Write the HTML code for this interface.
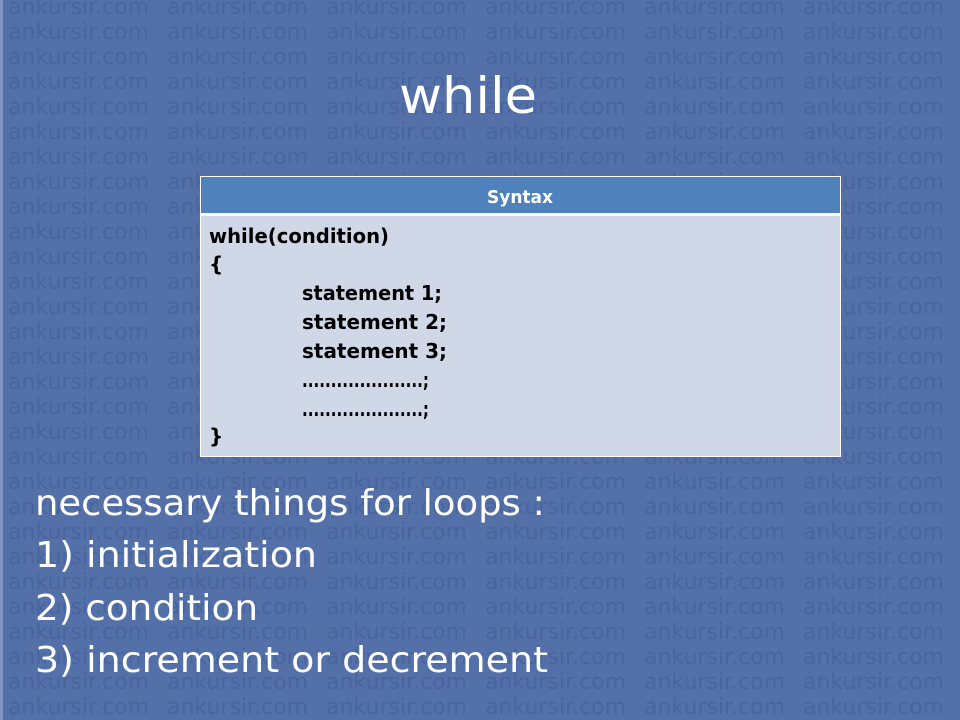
<!DOCTYPE html>
<html><head><meta charset="utf-8"><style>
body{margin:0;width:960px;height:720px;overflow:hidden;background:#5470a8;position:relative;font-family:"DejaVu Sans","Liberation Sans",sans-serif}
.wm{position:absolute;left:0;top:0;width:960px;height:720px;overflow:hidden}
.row{position:absolute;left:8px;white-space:nowrap;font-size:22px;color:#4a659e;height:25px;line-height:25px}
.row span{display:inline-block;width:159px}
.edge{position:absolute;left:0;top:0;width:3px;height:720px;background:#7f95c4}
svg{position:absolute;left:0;top:0}
</style></head><body>
<div class="wm">
<div class="row" style="top:-5px"><span>ankursir.com</span><span>ankursir.com</span><span>ankursir.com</span><span>ankursir.com</span><span>ankursir.com</span><span>ankursir.com</span><span>ankursir.com</span></div>
<div class="row" style="top:20px"><span>ankursir.com</span><span>ankursir.com</span><span>ankursir.com</span><span>ankursir.com</span><span>ankursir.com</span><span>ankursir.com</span><span>ankursir.com</span></div>
<div class="row" style="top:45px"><span>ankursir.com</span><span>ankursir.com</span><span>ankursir.com</span><span>ankursir.com</span><span>ankursir.com</span><span>ankursir.com</span><span>ankursir.com</span></div>
<div class="row" style="top:70px"><span>ankursir.com</span><span>ankursir.com</span><span>ankursir.com</span><span>ankursir.com</span><span>ankursir.com</span><span>ankursir.com</span><span>ankursir.com</span></div>
<div class="row" style="top:95px"><span>ankursir.com</span><span>ankursir.com</span><span>ankursir.com</span><span>ankursir.com</span><span>ankursir.com</span><span>ankursir.com</span><span>ankursir.com</span></div>
<div class="row" style="top:120px"><span>ankursir.com</span><span>ankursir.com</span><span>ankursir.com</span><span>ankursir.com</span><span>ankursir.com</span><span>ankursir.com</span><span>ankursir.com</span></div>
<div class="row" style="top:145px"><span>ankursir.com</span><span>ankursir.com</span><span>ankursir.com</span><span>ankursir.com</span><span>ankursir.com</span><span>ankursir.com</span><span>ankursir.com</span></div>
<div class="row" style="top:170px"><span>ankursir.com</span><span>ankursir.com</span><span>ankursir.com</span><span>ankursir.com</span><span>ankursir.com</span><span>ankursir.com</span><span>ankursir.com</span></div>
<div class="row" style="top:195px"><span>ankursir.com</span><span>ankursir.com</span><span>ankursir.com</span><span>ankursir.com</span><span>ankursir.com</span><span>ankursir.com</span><span>ankursir.com</span></div>
<div class="row" style="top:220px"><span>ankursir.com</span><span>ankursir.com</span><span>ankursir.com</span><span>ankursir.com</span><span>ankursir.com</span><span>ankursir.com</span><span>ankursir.com</span></div>
<div class="row" style="top:245px"><span>ankursir.com</span><span>ankursir.com</span><span>ankursir.com</span><span>ankursir.com</span><span>ankursir.com</span><span>ankursir.com</span><span>ankursir.com</span></div>
<div class="row" style="top:270px"><span>ankursir.com</span><span>ankursir.com</span><span>ankursir.com</span><span>ankursir.com</span><span>ankursir.com</span><span>ankursir.com</span><span>ankursir.com</span></div>
<div class="row" style="top:295px"><span>ankursir.com</span><span>ankursir.com</span><span>ankursir.com</span><span>ankursir.com</span><span>ankursir.com</span><span>ankursir.com</span><span>ankursir.com</span></div>
<div class="row" style="top:320px"><span>ankursir.com</span><span>ankursir.com</span><span>ankursir.com</span><span>ankursir.com</span><span>ankursir.com</span><span>ankursir.com</span><span>ankursir.com</span></div>
<div class="row" style="top:345px"><span>ankursir.com</span><span>ankursir.com</span><span>ankursir.com</span><span>ankursir.com</span><span>ankursir.com</span><span>ankursir.com</span><span>ankursir.com</span></div>
<div class="row" style="top:370px"><span>ankursir.com</span><span>ankursir.com</span><span>ankursir.com</span><span>ankursir.com</span><span>ankursir.com</span><span>ankursir.com</span><span>ankursir.com</span></div>
<div class="row" style="top:395px"><span>ankursir.com</span><span>ankursir.com</span><span>ankursir.com</span><span>ankursir.com</span><span>ankursir.com</span><span>ankursir.com</span><span>ankursir.com</span></div>
<div class="row" style="top:420px"><span>ankursir.com</span><span>ankursir.com</span><span>ankursir.com</span><span>ankursir.com</span><span>ankursir.com</span><span>ankursir.com</span><span>ankursir.com</span></div>
<div class="row" style="top:445px"><span>ankursir.com</span><span>ankursir.com</span><span>ankursir.com</span><span>ankursir.com</span><span>ankursir.com</span><span>ankursir.com</span><span>ankursir.com</span></div>
<div class="row" style="top:470px"><span>ankursir.com</span><span>ankursir.com</span><span>ankursir.com</span><span>ankursir.com</span><span>ankursir.com</span><span>ankursir.com</span><span>ankursir.com</span></div>
<div class="row" style="top:495px"><span>ankursir.com</span><span>ankursir.com</span><span>ankursir.com</span><span>ankursir.com</span><span>ankursir.com</span><span>ankursir.com</span><span>ankursir.com</span></div>
<div class="row" style="top:520px"><span>ankursir.com</span><span>ankursir.com</span><span>ankursir.com</span><span>ankursir.com</span><span>ankursir.com</span><span>ankursir.com</span><span>ankursir.com</span></div>
<div class="row" style="top:545px"><span>ankursir.com</span><span>ankursir.com</span><span>ankursir.com</span><span>ankursir.com</span><span>ankursir.com</span><span>ankursir.com</span><span>ankursir.com</span></div>
<div class="row" style="top:570px"><span>ankursir.com</span><span>ankursir.com</span><span>ankursir.com</span><span>ankursir.com</span><span>ankursir.com</span><span>ankursir.com</span><span>ankursir.com</span></div>
<div class="row" style="top:595px"><span>ankursir.com</span><span>ankursir.com</span><span>ankursir.com</span><span>ankursir.com</span><span>ankursir.com</span><span>ankursir.com</span><span>ankursir.com</span></div>
<div class="row" style="top:620px"><span>ankursir.com</span><span>ankursir.com</span><span>ankursir.com</span><span>ankursir.com</span><span>ankursir.com</span><span>ankursir.com</span><span>ankursir.com</span></div>
<div class="row" style="top:645px"><span>ankursir.com</span><span>ankursir.com</span><span>ankursir.com</span><span>ankursir.com</span><span>ankursir.com</span><span>ankursir.com</span><span>ankursir.com</span></div>
<div class="row" style="top:670px"><span>ankursir.com</span><span>ankursir.com</span><span>ankursir.com</span><span>ankursir.com</span><span>ankursir.com</span><span>ankursir.com</span><span>ankursir.com</span></div>
<div class="row" style="top:695px"><span>ankursir.com</span><span>ankursir.com</span><span>ankursir.com</span><span>ankursir.com</span><span>ankursir.com</span><span>ankursir.com</span><span>ankursir.com</span></div>
</div>
<div class="edge"></div>
<svg width="960" height="720" xmlns="http://www.w3.org/2000/svg" font-family="DejaVu Sans, Liberation Sans, sans-serif">
<rect x="200" y="176" width="641" height="281" fill="#fff"/>
<rect x="201" y="177" width="639" height="36" fill="#4f81bd"/>
<rect x="201" y="216" width="639" height="240" fill="#d0d8e8"/>
<text x="399" y="113" font-size="50" fill="#fff" textLength="138" lengthAdjust="spacingAndGlyphs">while</text>
<text x="487" y="203" font-size="18" fill="#fff" font-weight="bold" textLength="66" lengthAdjust="spacingAndGlyphs">Syntax</text>
<g font-size="20" font-weight="bold" fill="#000">
<text x="209" y="243" textLength="180" lengthAdjust="spacingAndGlyphs">while(condition)</text>
<text x="209" y="271">{</text>
<text x="302" y="300" textLength="140" lengthAdjust="spacingAndGlyphs">statement 1;</text>
<text x="302" y="329" textLength="145" lengthAdjust="spacingAndGlyphs">statement 2;</text>
<text x="302" y="358" textLength="145" lengthAdjust="spacingAndGlyphs">statement 3;</text>
<text x="302" y="387" textLength="127" lengthAdjust="spacingAndGlyphs">.....................;</text>
<text x="302" y="416" textLength="127" lengthAdjust="spacingAndGlyphs">.....................;</text>
<text x="209" y="443">}</text>
</g>
<g font-size="36" fill="#fff">
<text x="35" y="515" textLength="510" lengthAdjust="spacingAndGlyphs">necessary things for loops :</text>
<text x="35" y="567" textLength="282" lengthAdjust="spacingAndGlyphs">1)  initialization</text>
<text x="35" y="620" textLength="223" lengthAdjust="spacingAndGlyphs">2)  condition</text>
<text x="35" y="672" textLength="513" lengthAdjust="spacingAndGlyphs">3)  increment or  decrement</text>
</g>
</svg>
</body></html>
